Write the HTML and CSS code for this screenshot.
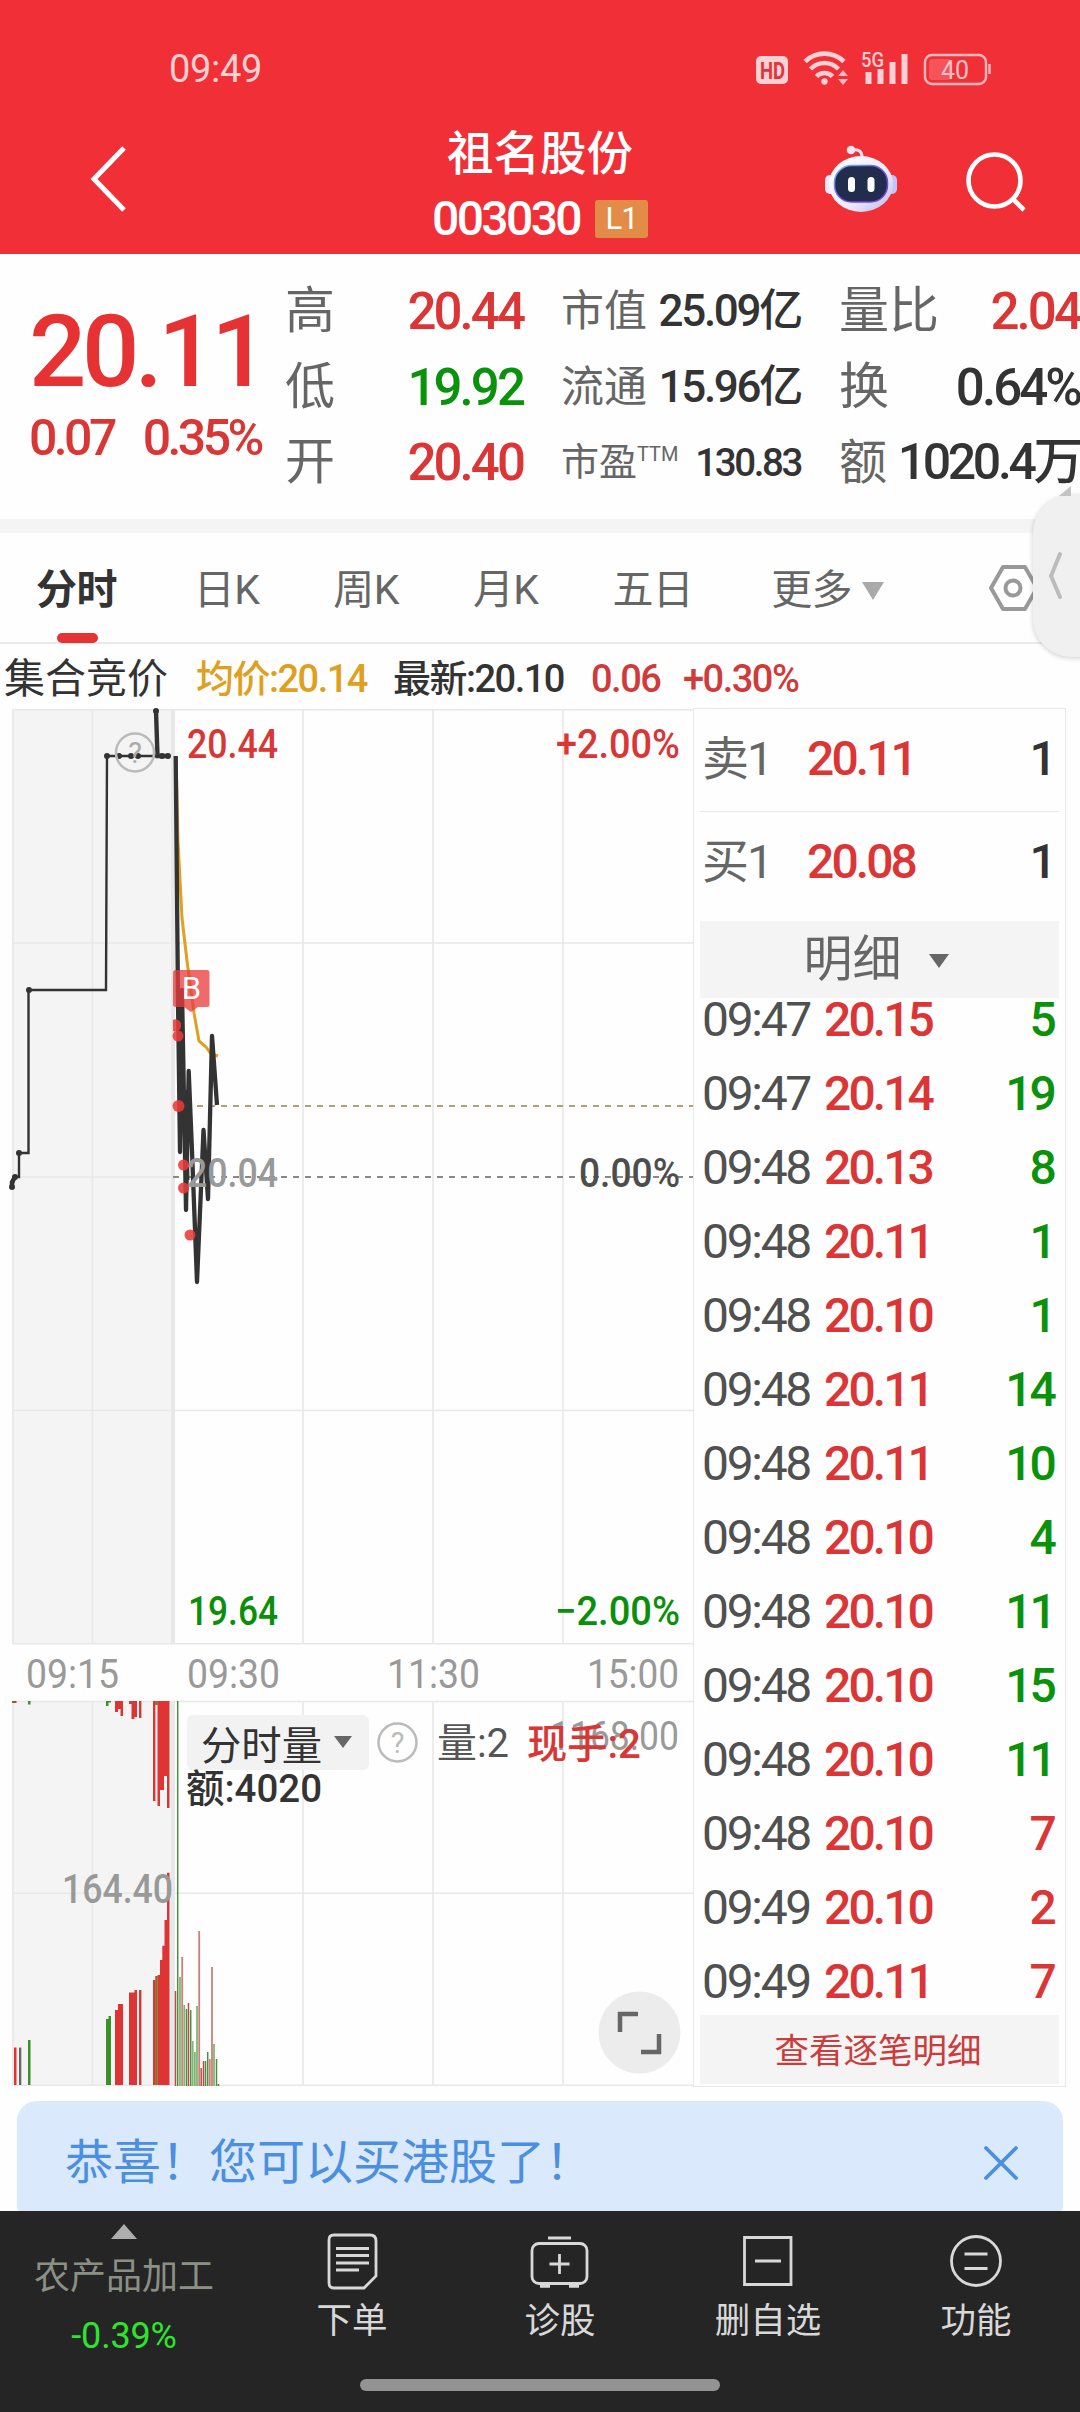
FILE: index.html
```html
<!DOCTYPE html>
<html lang="zh-CN">
<head>
    <meta charset="UTF-8">
    <meta name="viewport" content="width=device-width, initial-scale=1.0">
    <title>祖名股份 003030</title>
    <link rel="stylesheet" href="styles.css">
</head>
<body>
    <header class="header">
        <div class="status-bar">
            <span class="clock">09:49</span>
            <svg class="status-icons" width="236" height="38" viewBox="756 50 236 38">
                <rect x="756" y="56" width="32" height="28" rx="5" fill="#fdd0d3"/>
                <text x="760" y="78.500" font-size="24" font-weight="700" fill="#e0343c" textLength="25" lengthAdjust="spacingAndGlyphs">HD</text>
                <g fill="none" stroke="#fdd0d3" stroke-width="4.6">
                    <path d="M805 61.500a28 28 0 0 1 39 0"/>
                    <path d="M810.500 69a19.500 19.500 0 0 1 28 0"/>
                    <path d="M816.500 76.500a11 11 0 0 1 16 0"/>
                </g>
                <circle cx="824.500" cy="81.500" r="3.200" fill="#fdd0d3"/>
                <path d="M838 76h10l-5-6zM838 79h10l-5 6z" fill="#fdb9be"/>
                <text x="861" y="67" font-size="21" font-weight="500" fill="#fdd0d3" textLength="23" lengthAdjust="spacingAndGlyphs">5G</text>
                <path d="M865.500 72h6v12h-6zM877.500 69h6v15h-6zM889.500 62h6v22h-6zM901.500 54h6v30h-6z" fill="#fdd0d3"/>
                <rect x="925" y="55" width="61" height="29" rx="7" fill="none" stroke="#fdb9be" stroke-width="2.400"/>
                <rect x="929" y="59" width="23" height="21" rx="4" fill="#f5545b"/>
                <path d="M989.500 64v10" stroke="#fdb9be" stroke-width="2.500"/>
                <text x="941" y="78.500" font-size="25" fill="#fdc3c7" textLength="28" lengthAdjust="spacingAndGlyphs">40</text>
            </svg>
        </div>
        <div class="title-bar">
            <svg class="back" width="46" height="74" viewBox="0 0 46 74" fill="none" stroke="#fff" stroke-width="5">
                <path d="M38 6L8 37l30 31"/>
            </svg>
            <div class="title">
                <div class="name">祖名股份</div>
                <div class="code"><span>003030</span><span class="level">L1</span></div>
            </div>
            <svg class="robot" width="74" height="68" viewBox="825 145 74 68">
                <defs>
                    <linearGradient id="shell" x1="0" y1="0" x2="1" y2="1">
                        <stop offset="0" stop-color="#fff"/>
                        <stop offset=".6" stop-color="#ecebfa"/>
                        <stop offset="1" stop-color="#b9b5ee"/>
                    </linearGradient>
                    <linearGradient id="rim" x1="0" y1="0" x2="1" y2="1">
                        <stop offset="0" stop-color="#7cc6e8"/>
                        <stop offset=".5" stop-color="#6f4fd8"/>
                        <stop offset="1" stop-color="#7a3fd0"/>
                    </linearGradient>
                </defs>
                <path d="M851 150q11-2 11 7v5" fill="none" stroke="#f0dfee" stroke-width="3"/>
                <circle cx="851" cy="150" r="4.300" fill="#f5e6f2"/>
                <rect x="825" y="175" width="12" height="19" rx="5" fill="#eceaf9"/>
                <rect x="885" y="175" width="12" height="19" rx="5" fill="#c4c5f5"/>
                <ellipse cx="861" cy="184" rx="32" ry="28" fill="url(#shell)"/>
                <rect x="834.500" y="165.500" width="53" height="36.500" rx="17" fill="#222c4c" stroke="url(#rim)" stroke-width="1.500"/>
                <rect x="848" y="177" width="7" height="15" rx="3.500" fill="#fff"/>
                <rect x="867.500" y="177" width="7" height="15" rx="3.500" fill="#fff"/>
            </svg>
            <svg class="search" width="64" height="64" viewBox="964 150 64 64" fill="none" stroke="#fff" stroke-width="4.600">
                <circle cx="994.500" cy="180.500" r="26"/>
                <path d="M1013 199l11 11"/>
            </svg>
        </div>
    </header>

    <section class="quote">
        <div class="last">
            <div class="price">20.11</div>
            <div class="change"><span>0.07</span><span>0.35%</span></div>
        </div>
        <div class="stats">
            <div class="stat"><label>高</label><b class="up">20.44</b></div>
            <div class="stat mid"><label>市值</label><b>25.09亿</b></div>
            <div class="stat"><label>量比</label><b class="up">2.04</b></div>
            <div class="stat"><label>低</label><b class="down">19.92</b></div>
            <div class="stat mid"><label>流通</label><b>15.96亿</b></div>
            <div class="stat"><label>换</label><b>0.64%</b></div>
            <div class="stat"><label>开</label><b class="up">20.40</b></div>
            <div class="stat small"><label>市盈<sup>TTM</sup></label><b>130.83</b></div>
            <div class="stat amount"><label>额</label><b>1020.4万</b></div>
        </div>
    </section>

    <nav class="tabs">
        <span class="tab active">分时</span>
        <span class="tab">日K</span>
        <span class="tab">周K</span>
        <span class="tab">月K</span>
        <span class="tab">五日</span>
        <span class="tab">更多<i class="caret"></i></span>
        <svg class="gear" width="50" height="50" viewBox="0 0 50 50" fill="none" stroke="#999" stroke-width="4">
            <path d="M14 4h22l12 21-12 21H14L2 25z" stroke-linejoin="round"/>
            <circle cx="24" cy="25" r="7.500"/>
        </svg>
        <div class="drawer">
            <svg width="16" height="50" viewBox="0 0 16 50" fill="none" stroke="#bcbcbc" stroke-width="4" stroke-linecap="round">
                <path d="M12 3L3 25l9 21"/>
            </svg>
        </div>
    </nav>

    <div class="info">
        <span class="auction">集合竞价</span>
        <span class="avg">均价:20.14</span>
        <span class="latest">最新:20.10</span>
        <span class="diff">0.06</span>
        <span class="diff">+0.30%</span>
    </div>

    <main class="board">
        <svg class="chart" width="693" height="1380" viewBox="0 708 693 1380">
            <!-- auction background and grid -->
            <path d="M12 709h162v935H12zM12 1701h162v384H12z" fill="#f4f4f4"/>
            <g stroke="#e8e8e8" stroke-width="1.600">
                <path d="M12 709.800h682M12 943h682M12 1177h162M12 1410.500h682M12 1643.800h682M12 1701.500h682M12 1893.300h682M12 2085.200h682"/>
                <path d="M13 709v935M92.500 709v935M303 709v935M433 709v935M563 709v935"/>
                <path d="M13 1701v384M92.500 1701v384M303 1701v384M433 1701v384M563 1701v384"/>
                <path d="M173 709v935M173 1701v384" stroke-width="4"/>
            </g>
            <path d="M197 1106h497" stroke="#b0a275" stroke-width="1.800" stroke-dasharray="6 6"/>
            <path d="M173 1177h521" stroke="#888" stroke-width="1.800" stroke-dasharray="6 6"/>

            <!-- auction price -->
            <path d="M12 1187l3-10h4v-24h9.500V990H106l1-234h62" fill="none" stroke="#333" stroke-width="2.400"/>
            <path d="M12 1187v-5l3-5M156 711l1.500 45H169" fill="none" stroke="#333" stroke-width="4.400"/>
            <g fill="#333">
                <circle cx="12" cy="1187" r="3"/><circle cx="15" cy="1177" r="3"/><circle cx="19" cy="1153" r="3"/>
                <circle cx="29" cy="990" r="3"/><circle cx="107" cy="756" r="3"/><circle cx="119" cy="756" r="3"/>
                <circle cx="131" cy="756" r="3"/><circle cx="138" cy="756" r="3"/><circle cx="156" cy="711" r="3"/>
                <circle cx="162" cy="756" r="3"/><circle cx="168" cy="756" r="3"/>
            </g>
            <circle cx="135" cy="752.500" r="19" fill="none" stroke="#bbb" stroke-width="2.500"/>
            <text x="135" y="763" font-size="29" text-anchor="middle" fill="#aaa">?</text>

            <!-- average and price lines -->
            <path d="M176 756l2 85 4 77 5 43 7 52 5 28 7 6 5 7 7 2" fill="none" stroke="#dfa024" stroke-width="3"/>
            <path d="M175.700 756L178 1000l2 152 2-162 4 220 2.700-139 3.300 80 5 131 6.500-152 4.500 69 4-163 5 69" fill="none" stroke="#333" stroke-width="4.300" stroke-linejoin="round"/>
            <path d="M179 1000l2 110 4-20 2 90" fill="none" stroke="#333" stroke-width="5"/>
            <g fill="#e93a3a" fill-opacity=".88">
                <path d="M173 1020a5.500 5.500 0 0 1 8 6 5.500 5.500 0 0 1-8 5z"/>
                <circle cx="178" cy="1036" r="5.500"/>
                <circle cx="178.500" cy="1106" r="6"/>
                <circle cx="183.500" cy="1165" r="5.500"/>
                <circle cx="183.500" cy="1188" r="5.500"/>
                <circle cx="190" cy="1235" r="5.500"/>
            </g>
            <path d="M176 970h31q2.500 0 2.500 2.500v32q0 2.500-2.500 2.500h-9l-7 5-7-5h-8q-3 0-3-2.500v-32q0-2.500 3-2.500z" fill="#ea3b3b" fill-opacity=".76"/>
            <text x="191.500" y="999" font-size="31" font-weight="400" text-anchor="middle" fill="#fff">B</text>

            <g font-size="40" font-weight="500">
                <text x="187" y="758" fill="#d93636" textLength="91" lengthAdjust="spacingAndGlyphs">20.44</text>
                <text x="556" y="758" fill="#d93636" textLength="124" lengthAdjust="spacingAndGlyphs">+2.00%</text>
                <text x="187" y="1187" fill="#999" textLength="91" lengthAdjust="spacingAndGlyphs">20.04</text>
                <text x="579" y="1187" fill="#4d4d4d" textLength="101" lengthAdjust="spacingAndGlyphs">0.00%</text>
                <text x="188" y="1625" fill="#0a8f0a" textLength="90" lengthAdjust="spacingAndGlyphs">19.64</text>
                <text x="555" y="1625" fill="#0a8f0a" textLength="125" lengthAdjust="spacingAndGlyphs">−2.00%</text>
            </g>
            <g font-size="40" fill="#999">
                <text x="26" y="1688" textLength="93" lengthAdjust="spacingAndGlyphs">09:15</text>
                <text x="187" y="1688" textLength="93" lengthAdjust="spacingAndGlyphs">09:30</text>
                <text x="387" y="1688" textLength="93" lengthAdjust="spacingAndGlyphs">11:30</text>
                <text x="587" y="1688" textLength="92" lengthAdjust="spacingAndGlyphs">15:00</text>
            </g>

            <!-- auction volume -->
            <g fill="#df3434">
                <path d="M14 1701h2.500v2H14zM115 1701h3v11h-3zM118 1701h2.500v8H118zM120.500 1701h2.500v15h-2.500zM129 1701h2.500v3H129zM131.500 1701h3v18h-3zM134.500 1701h2.500v16h-2.500zM139 1701h2.400v17H139z"/>
                <path d="M153 1701h2.400v100H153zM157.500 1701h2.500v105h-2.500zM160 1701h4v89h-4zM164 1701h3v75h-3zM167 1701h2.500v107H167z"/>
                <path d="M14 2047.600h2.500V2085H14zM115 2010h3v75h-3zM118 2004h5v81h-5zM129 1992.500h5.500v92.500H129zM134.500 1990h2.500v95h-2.500zM139 1990h2.400v95H139zM153 1980h2.400v105H153z"/>
                <path d="M157.500 1975h2.500v110h-2.500zM160 1960h2.300v125H160zM162.300 1945.700h2.200V2085h-2.200zM164.500 1920h2.500v165h-2.500zM167 1872.700h2.500V2085H167z"/>
            </g>
            <path d="M12 1701h2v2h-2zM28 1701h2.500v3.500H28zM106 1701h2.500v5H106zM108.500 1701h2.500v1.500h-2.500zM28 2040h2.500v45H28zM106 2019h2.500v66H106zM108.500 2016h2.500v69h-2.500z" fill="#3a9128"/>
            <path d="M155.200 1701h2.500v4h-2.500zM155.200 1976h2.500v109h-2.500z" fill="#8a6a2a"/>
            <path d="M19 2047.600h2.300V2085H19z" fill="#666"/>

            <!-- session volume -->
            <g fill="none" stroke-width="1.500">
                <path d="M177.700 2086V1701M186.500 2086v-77M190.700 2086v-76M205.500 2086v-25M207.700 2086v-34M216.500 2086v-27M218.500 2086v-2" stroke="#4a9042"/>
                <path d="M180 2086v-109M184.300 2086v-81M192.700 2086v-45M194.900 2086v-34M197 2086v-80M214 2086v-42" stroke="#7fb876" stroke-width="1.800"/>
                <path d="M175.500 2086v-95M188.500 2086v-83M201.200 2086v-18M203.500 2086v-25" stroke="#c04848"/>
                <path d="M182.200 2086v-129M199.200 2086v-155M209.800 2086v-27M212 2086v-119" stroke="#cf7f78" stroke-width="1.800"/>
            </g>
            <text x="62" y="1903" font-size="40" font-weight="500" fill="#999" textLength="111" lengthAdjust="spacingAndGlyphs">164.40</text>

            <rect x="187" y="1715" width="182" height="55" rx="6" fill="#f2f2f2"/>
            <text x="201" y="1760" font-size="40" fill="#333" textLength="121" lengthAdjust="spacingAndGlyphs">分时量</text>
            <path d="M334 1736h18l-9 12z" fill="#666"/>
            <circle cx="397.500" cy="1742.500" r="19" fill="none" stroke="#bbb" stroke-width="2.500"/>
            <text x="397.500" y="1753" font-size="29" text-anchor="middle" fill="#bbb">?</text>
            <text x="437" y="1757" font-size="40" fill="#555" textLength="72" lengthAdjust="spacingAndGlyphs">量:2</text>
            <text x="550" y="1750" font-size="40" fill="#999" textLength="129" lengthAdjust="spacingAndGlyphs">1168.00</text>
            <text x="527" y="1758" font-size="40" font-weight="500" fill="#d93636" textLength="114" lengthAdjust="spacingAndGlyphs">现手:2</text>
            <text x="186" y="1802" font-size="39" font-weight="500" fill="#333" textLength="136" lengthAdjust="spacingAndGlyphs">额:4020</text>

            <circle cx="639.500" cy="2032.500" r="41" fill="#ececec"/>
            <path d="M620 2032v-18h18M641 2052h18v-18" fill="none" stroke="#666" stroke-width="4.500"/>
        </svg>

        <aside class="panel">
            <div class="order"><span>卖1</span><b>20.11</b><em>1</em></div>
            <div class="order"><span>买1</span><b>20.08</b><em>1</em></div>
            <div class="detail-head"><span>明细</span><i class="caret"></i></div>
            <div class="ticks">
                <div class="tick down"><span>09:47</span><b>20.15</b><em>5</em></div>
                <div class="tick down"><span>09:47</span><b>20.14</b><em>19</em></div>
                <div class="tick down"><span>09:48</span><b>20.13</b><em>8</em></div>
                <div class="tick down"><span>09:48</span><b>20.11</b><em>1</em></div>
                <div class="tick down"><span>09:48</span><b>20.10</b><em>1</em></div>
                <div class="tick down"><span>09:48</span><b>20.11</b><em>14</em></div>
                <div class="tick down"><span>09:48</span><b>20.11</b><em>10</em></div>
                <div class="tick down"><span>09:48</span><b>20.10</b><em>4</em></div>
                <div class="tick down"><span>09:48</span><b>20.10</b><em>11</em></div>
                <div class="tick down"><span>09:48</span><b>20.10</b><em>15</em></div>
                <div class="tick down"><span>09:48</span><b>20.10</b><em>11</em></div>
                <div class="tick up"><span>09:48</span><b>20.10</b><em>7</em></div>
                <div class="tick up"><span>09:49</span><b>20.10</b><em>2</em></div>
                <div class="tick up"><span>09:49</span><b>20.11</b><em>7</em></div>
            </div>
            <div class="more">查看逐笔明细</div>
        </aside>
    </main>

    <div class="banner">
        <span>恭喜！您可以买港股了！</span>
        <svg width="34" height="34" viewBox="0 0 34 34" stroke="#4a8fe0" stroke-width="3.800" stroke-linecap="round">
            <path d="M2 2l30 30M32 2L2 32"/>
        </svg>
    </div>

    <footer class="toolbar">
        <div class="items">
            <div class="sector">
                <i class="arrow"></i>
                <span class="sector-name">农产品加工</span>
                <span class="sector-change">-0.39%</span>
            </div>
            <div class="item">
                <svg width="60" height="60" viewBox="0 0 60 60" fill="none" stroke="#d8d8d8" stroke-width="2.800">
                    <path d="M12 4h36q6 0 6 6v35L42 57H12q-5 0-5-5V9q0-5 5-5z"/>
                    <path d="M14 17.500h33M14 24.500h33M14 32h33M14 39h23"/>
                </svg>
                <span>下单</span>
            </div>
            <div class="item">
                <svg width="60" height="60" viewBox="0 0 60 60" fill="none" stroke="#d8d8d8" stroke-width="2.800">
                    <rect x="2" y="12.500" width="55" height="40" rx="7"/>
                    <path d="M18 7h23M29.500 23v20M19.500 33h20"/>
                    <path d="M10 54.500h10M39 54.500h10" stroke-width="4.500"/>
                </svg>
                <span>诊股</span>
            </div>
            <div class="item">
                <svg width="60" height="60" viewBox="0 0 60 60" fill="none" stroke="#d8d8d8" stroke-width="2.800">
                    <path d="M6.500 6.500h46.500v47H6.500zM17 30h26"/>
                </svg>
                <span>删自选</span>
            </div>
            <div class="item">
                <svg width="60" height="60" viewBox="0 0 60 60" fill="none" stroke="#d8d8d8" stroke-width="2.800">
                    <circle cx="30" cy="30" r="24.500"/>
                    <path d="M18.500 23h23M18.500 37.500h23"/>
                </svg>
                <span>功能</span>
            </div>
        </div>
        <div class="home-bar"></div>
    </footer>
</body>
</html>
```
FILE: styles.css
```css
body {
    width: 1080px;
    height: 2412px;
    margin: 0;
    overflow: hidden;
    background: #fefefe;
    color: #333;
    font-family: Roboto, "Noto Sans CJK SC", sans-serif;
    display: flex;
    flex-direction: column;
}

* {
    box-sizing: border-box;
}

svg {
    display: block;
    flex: none;
    overflow: visible;
}

.chart {
    overflow: hidden;
}

b {
    font-weight: 500;
}

em, i {
    font-style: normal;
}

.up {
    color: #dc3535;
}

.down {
    color: #0a920a;
}

/* header */
.header {
    height: 254px;
    flex: none;
    background: #f12f37;
    color: #fff;
}

.status-bar {
    height: 110px;
    padding: 50px 88px 0 169px;
    display: flex;
    justify-content: space-between;
}

.clock {
    font-size: 38px;
    line-height: 39px;
    letter-spacing: -0.3px;
    color: #fdd0d3;
}

.title-bar {
    height: 144px;
    padding: 0 52px 0 86px;
    display: flex;
}

.back {
    margin-top: 32px;
}

.title {
    width: 300px;
    margin-left: 258px;
    text-align: center;
}

.name {
    margin-top: 12px;
    font-size: 46.5px;
    line-height: 64px;
    font-weight: 500;
}

.code {
    display: flex;
    justify-content: center;
    align-items: center;
    gap: 15px;
    margin-top: 13px;
    font-size: 48px;
    font-weight: 500;
    line-height: 40px;
    letter-spacing: -2.6px;
}

.level {
    width: 53px;
    height: 38px;
    border-radius: 3px;
    background: #e38c48;
    font-size: 31px;
    font-weight: 400;
    letter-spacing: -1px;
    line-height: 38px;
}

.robot {
    margin: 35px 0 0 135px;
}

.search {
    margin: 40px 0 0 65px;
}

/* quote */
.quote {
    height: 265px;
    flex: none;
    display: flex;
}

.last {
    width: 285px;
    padding-left: 29px;
    color: #e63232;
    font-weight: 500;
    white-space: nowrap;
}

.price {
    margin-top: 48px;
    font-size: 101px;
    line-height: 100px;
    letter-spacing: -4.5px;
}

.change {
    display: flex;
    gap: 29px;
    margin-top: 6px;
    font-size: 50px;
    line-height: 60px;
    letter-spacing: -3.6px;
    color: #d93636;
}

.stats {
    display: grid;
    grid-template-columns: 238px 240px 241px;
    grid-auto-rows: 75.5px;
    column-gap: 38px;
    padding-top: 20px;
}

.stat {
    display: flex;
    justify-content: space-between;
    align-items: center;
    white-space: nowrap;
    font-size: 50px;
    line-height: 75px;
}

.stat label {
    color: #666;
    font-weight: 400;
}

.stat b {
    font-size: 51px;
    letter-spacing: -2.9px;
}

.stat.mid {
    font-size: 43px;
}

.stat.mid b {
    font-size: 44px;
    letter-spacing: -2.3px;
}

.stat.small {
    font-size: 38px;
}

.stat.small b {
    font-size: 38.5px;
    letter-spacing: -2.4px;
}

.stat sup {
    font-size: 20px;
    line-height: 1;
    vertical-align: 14px;
}

.stat.amount {
    font-size: 48px;
}

.stat.amount b {
    font-size: 50px;
    letter-spacing: -3.4px;
}

/* period tabs */
.tabs {
    position: relative;
    height: 125px;
    flex: none;
    display: flex;
    padding-left: 36px;
    border-top: 14px solid #f4f4f4;
    border-bottom: 2px solid #e9e9e9;
}

.tab {
    position: relative;
    margin-right: 74px;
    font-size: 41px;
    line-height: 114px;
    height: 110px;
    letter-spacing: -0.6px;
    color: #666;
    white-space: nowrap;
}

.tab:nth-child(1) {
    margin-right: 77px;
}

.tab:nth-child(4) {
    margin-right: 74px;
}

.tab:nth-child(5) {
    margin-right: 78px;
}

.tab:nth-child(6) {
    width: 116px;
    margin-right: 0;
}

.tab.active {
    color: #333;
    font-weight: 700;
}

.tab.active::after {
    content: "";
    position: absolute;
    left: 21px;
    bottom: 0;
    width: 41px;
    height: 10px;
    border-radius: 5px;
    background: #e63232;
}

.caret {
    display: inline-block;
    border: 11px solid transparent;
    border-top: 18px solid #aaa;
    border-bottom: 0;
    margin-left: 10px;
    vertical-align: 4px;
}

.gear {
    margin: 30px 41px 0 auto;
}

.drawer {
    position: absolute;
    top: -38px;
    right: -8px;
    width: 55px;
    height: 162px;
    padding: 56px 0 0 15px;
    border-radius: 38px 0 0 38px;
    background: #f0f0f0;
    box-shadow: 0 1px 5px rgba(0, 0, 0, 0.2);
}

.drawer::before {
    content: "";
    position: absolute;
    top: -9px;
    left: 26px;
    border-left: 12px solid transparent;
    border-bottom: 10px solid #c4c4c4;
}

/* averages line */
.info {
    height: 64px;
    flex: none;
    display: flex;
    padding-left: 4px;
    font-size: 38px;
    font-weight: 500;
    line-height: 71px;
    letter-spacing: -1.5px;
    white-space: nowrap;
}

.auction {
    width: 192px;
    font-size: 41px;
    letter-spacing: 0;
    font-weight: 400;
}

.avg {
    width: 197px;
    color: #dfa01e;
}

.latest {
    width: 198px;
}

.diff {
    width: 92px;
    color: #d13a3a;
}

/* chart and order panel */
.board {
    height: 1380px;
    flex: none;
    display: flex;
}

.panel {
    width: 373px;
    height: 1379px;
    padding: 0 6px;
    border: 1.5px solid #e8e8e8;
}

.order, .tick {
    display: flex;
    align-items: center;
    padding: 0 5px 0 2px;
    font-size: 48px;
    line-height: 74px;
    letter-spacing: -2.9px;
    white-space: nowrap;
}

.order {
    height: 103px;
    padding-bottom: 3px;
    border-bottom: 1.5px solid #e8e8e8;
}

.order + .order {
    border: 0;
}

.order span {
    width: 105px;
    font-size: 47px;
    letter-spacing: -2px;
    color: #666;
}

.order b, .tick b {
    color: #dc3535;
}

.order em, .tick em {
    margin-left: auto;
    font-weight: 500;
}

.detail-head {
    height: 77px;
    margin-top: 6px;
    background: #f4f4f4;
    color: #666;
    font-size: 49px;
    line-height: 82px;
    display: flex;
    justify-content: center;
    align-items: center;
    padding-right: 7px;
}

.detail-head .caret {
    border: 10px solid transparent;
    border-top: 14px solid #666;
    border-bottom: 0;
    margin: 2px 0 0 27px;
}

.ticks {
    height: 1017px;
    overflow: hidden;
}

.tick {
    height: 74px;
}

.tick:first-child {
    margin-top: -15px;
}

.tick span {
    width: 122px;
    color: #505050;
    letter-spacing: -2.3px;
}

.more {
    height: 69px;
    padding-right: 3px;
    background: #f4f4f4;
    color: #cb3c3c;
    font-size: 34.5px;
    line-height: 73px;
    text-align: center;
}

/* notice */
.banner {
    height: 110px;
    flex: none;
    margin: 13px 17px 0;
    padding: 14px 45px 0 48px;
    border-radius: 20px 20px 4px 4px;
    background: #dae9fc;
    color: #4a8fe0;
    font-size: 48px;
    line-height: 70px;
    display: flex;
    justify-content: space-between;
    align-items: center;
}

/* bottom toolbar */
.toolbar {
    height: 201px;
    flex: none;
    background: #252525;
    color: #d8d8d8;
}

.items {
    display: flex;
    height: 168px;
}

.sector {
    width: 248px;
    display: flex;
    flex-direction: column;
    align-items: center;
    padding-top: 13px;
    font-size: 36px;
}

.arrow {
    border: 13px solid transparent;
    border-bottom: 15px solid #aeaeae;
    border-top: 0;
}

.sector-name {
    margin-top: 10px;
    line-height: 56px;
    color: #8b9085;
}

.sector-change {
    margin-top: 5px;
    line-height: 52px;
    letter-spacing: -0.2px;
    color: #2ce62c;
}

.item {
    width: 208px;
    display: flex;
    flex-direction: column;
    align-items: center;
    padding-top: 20px;
    font-size: 35.5px;
    line-height: 60px;
}

.home-bar {
    width: 360px;
    height: 12px;
    margin: 0 auto;
    border-radius: 6px;
    background: #939393;
}
```
